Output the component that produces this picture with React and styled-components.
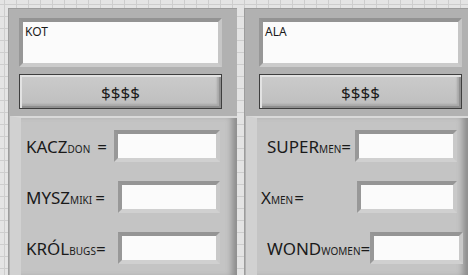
import React from 'react';
import styled, { createGlobalStyle } from 'styled-components';

const GlobalStyle = createGlobalStyle`
	html, body {
		margin: 0;
		padding: 0;
	}
	body {
		width: 468px;
		height: 275px;
		overflow: hidden;
		font-family: "Noto Sans", "Open Sans", sans-serif;
		background-color: #e4e4e4;
		background-image:
			linear-gradient(to right, #cdcdcd 1px, transparent 1px),
			linear-gradient(to bottom, #cdcdcd 1px, transparent 1px);
		background-size: 12px 12px;
		background-position: 4px 4px;
	}
`;

const Panels = styled.div`
	display: grid;
	grid-template-columns: 229px 224px;
	column-gap: 7px;
	padding: 8px 0 0 8px;
	height: 267px;
`;

const Panel = styled.div`
	display: flex;
	flex-direction: column;
	background: #b1b1b1;
	border-top: 1px solid #9c9c9c;
	border-left: 1px solid #9c9c9c;
	box-sizing: border-box;
	height: 100%;
`;

const TopSection = styled.div`
	display: flex;
	flex-direction: column;
	gap: 7px;
	padding: 9px 0 6px ${p => p.$left}px;
	height: 107px;
	box-sizing: border-box;
`;

const TextBox = styled.div`
	width: ${p => p.$width}px;
	height: 49px;
	box-sizing: border-box;
	border: 4px solid;
	border-color: #939393 #c6c6c6 #cbcbcb #979797;
	background: #fbfbfb;
	font-size: 12px;
	color: #1a1a1a;
	padding: 2px 0 0 2px;
	line-height: 16px;
`;

const Button = styled.div`
	width: ${p => p.$width}px;
	height: 35px;
	box-sizing: border-box;
	border: 1px solid #3e3e3e;
	background: linear-gradient(#cbcbcb, #bebebe);
	box-shadow: inset 2px 2px 0 #e2e2e2, inset -2px -2px 0 #8e8e8e, inset -4px -4px 2px #a8a8a8;
	display: flex;
	align-items: center;
	justify-content: center;
	font-size: 17px;
	color: #1b1b1b;
	padding-top: 1px;
`;

const LowerSection = styled.div`
	flex: 1;
	margin-left: 1px;
	background: #c4c4c4;
	border-left: 11px solid #d1d1d1;
	border-top: 2px solid #d9d9d9;
	box-shadow: inset -8px 0 6px -3px #8c8c8c;
	display: flex;
	flex-direction: column;
	gap: 19px;
	padding: 12px 0 0 0;
`;

const Row = styled.div`
	display: flex;
	align-items: center;
	justify-content: space-between;
	height: 32px;
	padding-right: ${p => p.$right}px;
	padding-left: ${p => p.$left}px;
`;

const Label = styled.div`
	font-size: 17px;
	color: #1a1a1a;
	white-space: nowrap;
	display: flex;
	align-items: baseline;
`;

const Sub = styled.span`
	font-size: 10px;
	margin-right: ${p => p.$gap}px;
`;

const Field = styled.div`
	width: ${p => p.$width}px;
	height: 32px;
	box-sizing: border-box;
	border: 4px solid;
	border-color: #959595 #c9c9c9 #d0d0d0 #989898;
	background: #fbfbfb;
	flex-shrink: 0;
`;

const leftRows = [
	{ main: 'KACZ', sub: 'DON', gap: 7, width: 106 },
	{ main: 'MYSZ', sub: 'MIKI', gap: 3, width: 102 },
	{ main: 'KRÓL', sub: 'BUGS', gap: 0, width: 102 },
];

const rightRows = [
	{ main: 'SUPER', sub: 'MEN', gap: 0, width: 102, left: 10 },
	{ main: 'X', sub: 'MEN', gap: 1, width: 100, left: 4 },
	{ main: 'WOND', sub: 'WOMEN', gap: 0, width: 93, left: 10 },
];

const Column = ({ text, left, width, rows, rowLeft, rowRight }) => (
	<Panel>
		<TopSection $left={left}>
			<TextBox $width={width}>{text}</TextBox>
			<Button $width={width}>$$$$</Button>
		</TopSection>
		<LowerSection>
			{rows.map(row => (
				<Row key={row.main} $left={row.left ?? rowLeft} $right={rowRight}>
					<Label>
						{row.main}
						<Sub $gap={row.gap}>{row.sub}</Sub>
						=
					</Label>
					<Field $width={row.width} />
				</Row>
			))}
		</LowerSection>
	</Panel>
);

export default function App() {
	return (
		<>
			<GlobalStyle />
			<Panels>
				<Column text="KOT" left={10} width={203} rows={leftRows} rowLeft={5} rowRight={17} />
				<Column text="ALA" left={14} width={203} rows={rightRows} rowLeft={5} rowRight={11} />
			</Panels>
		</>
	);
}
